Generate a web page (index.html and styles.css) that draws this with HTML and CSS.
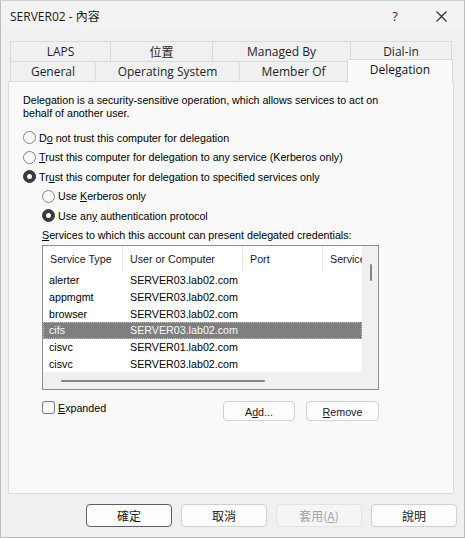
FILE: index.html
```html
<!DOCTYPE html>
<html lang="zh-Hant">
<head>
    <meta charset="UTF-8">
    <title>SERVER02 - 內容</title>
    <link rel="stylesheet" href="styles.css">
</head>
<body>
    <div class="window">
        <div class="titlebar">
            <span class="title">SERVER02 - 內容</span>
            <span class="caption-btn">?</span>
            <span class="caption-btn">
                <svg width="11" height="11" viewBox="0 0 11 11"><path d="M0.5 0.5 L10.5 10.5 M10.5 0.5 L0.5 10.5" stroke="#2b2b2b" stroke-width="1.1" fill="none"/></svg>
            </span>
        </div>

        <div class="tabs">
            <div class="tab-row">
                <div class="tab first" style="width:101px">LAPS</div>
                <div class="tab" style="width:102px">位置</div>
                <div class="tab" style="width:138px">Managed By</div>
                <div class="tab" style="width:101px">Dial-in</div>
            </div>
            <div class="tab-row">
                <div class="tab first" style="width:86px">General</div>
                <div class="tab" style="width:144px">Operating System</div>
                <div class="tab" style="width:108px">Member Of</div>
                <div class="tab selected" style="width:106px">Delegation</div>
            </div>
        </div>

        <div class="panel">
            <p class="intro">Delegation is a security-sensitive operation, which allows services to act on behalf of another user.</p>

            <div class="radio-row first-radio"><span class="radio"></span><span>D<u>o</u> not trust this computer for delegation</span></div>
            <div class="radio-row"><span class="radio"></span><span><u>T</u>rust this computer for delegation to any service (Kerberos only)</span></div>
            <div class="radio-row"><span class="radio on"></span><span>Tr<u>u</u>st this computer for delegation to specified services only</span></div>
            <div class="radio-row sub"><span class="radio"></span><span>Use <u>K</u>erberos only</span></div>
            <div class="radio-row sub"><span class="radio on"></span><span>Use an<u>y</u> authentication protocol</span></div>
            <div class="list-label"><span><u>S</u>ervices to which this account can present delegated credentials:</span></div>

            <div class="listview">
                <div class="list-body">
                    <div class="list-head">
                        <div class="col c1">Service Type</div>
                        <div class="col c2">User or Computer</div>
                        <div class="col c3">Port</div>
                        <div class="col c4">Service</div>
                    </div>
                    <div class="list-row"><span class="c1">alerter</span><span class="c2">SERVER03.lab02.com</span></div>
                    <div class="list-row"><span class="c1">appmgmt</span><span class="c2">SERVER03.lab02.com</span></div>
                    <div class="list-row"><span class="c1">browser</span><span class="c2">SERVER03.lab02.com</span></div>
                    <div class="list-row selected"><span class="c1">cifs</span><span class="c2">SERVER03.lab02.com</span></div>
                    <div class="list-row"><span class="c1">cisvc</span><span class="c2">SERVER01.lab02.com</span></div>
                    <div class="list-row"><span class="c1">cisvc</span><span class="c2">SERVER03.lab02.com</span></div>
                </div>
                <div class="vscroll"><div class="vthumb"></div></div>
                <div class="hscroll"><div class="hthumb"></div></div>
                <div class="corner"></div>
            </div>

            <div class="list-actions">
                <label class="check"><span class="box"></span><span><u>E</u>xpanded</span></label>
                <button class="small-btn add">A<u>d</u>d...</button>
                <button class="small-btn remove"><u>R</u>emove</button>
            </div>
        </div>

        <div class="footer">
            <button class="dlg-btn default">確定</button>
            <button class="dlg-btn">取消</button>
            <button class="dlg-btn disabled">套用(<u>A</u>)</button>
            <button class="dlg-btn">說明</button>
        </div>
    </div>
</body>
</html>
```

FILE: styles.css
```css
body {
    margin: 0;
    background: #f0f0f0;
}
.window {
    width: 465px;
    height: 538px;
    box-sizing: border-box;
    border: 1px solid #bcbcbc;
    border-top-color: #d0d0d0;
    background: #f0f0f0;
    display: flex;
    flex-direction: column;
    font-family: "Liberation Sans", Arial, sans-serif;
    color: #000;
}
.titlebar {
    height: 30px;
    display: flex;
    align-items: center;
    padding-left: 9px;
    background: #f3f3f3;
    font: 12px "Open Sans", "Noto Sans CJK TC", sans-serif;
    color: #1a1a1a;
}
.title {
    flex: 1;
}
.caption-btn {
    width: 46px;
    height: 30px;
    display: flex;
    align-items: center;
    justify-content: center;
    font-size: 13px;
    color: #2b2b2b;
}

/* tabs */
.tabs {
    margin: 10px 0 0 9px;
    font: 12px "Open Sans", "Noto Sans CJK TC", sans-serif;
    color: #1f1f1f;
}
.tab-row {
    display: flex;
    align-items: flex-start;
    height: 20px;
}
.tab {
    flex-shrink: 0;
    height: 20px;
    box-sizing: border-box;
    border-top: 1px solid #dadada;
    border-right: 1px solid #dadada;
    display: flex;
    align-items: center;
    justify-content: center;
    background: #f0f0f0;
}
.tab.first {
    border-left: 1px solid #dadada;
}
.tab.selected {
    height: 24px;
    margin-top: -2px;
    padding-bottom: 5px;
    border-left: 1px solid #dadada;
    margin-left: -1px;
    background: #f9f9f9;
    position: relative;
    z-index: 2;
    color: #111;
}

/* panel */
.panel {
    position: relative;
    z-index: 1;
    margin-left: 7px;
    width: 446px;
    height: 413px;
    box-sizing: border-box;
    border: 1px solid #dcdcdc;
    background: #f9f9f9;
    padding: 12px 0 0 14px;
    font-size: 10.7px;
}
.intro {
    margin: 0;
    width: 380px;
    line-height: 13px;
}
.radio-row {
    height: 19.5px;
    display: flex;
    align-items: center;
    gap: 3px;
    white-space: nowrap;
}
.first-radio {
    margin-top: 8px;
}
.radio-row.sub {
    padding-left: 19px;
}
.radio {
    flex-shrink: 0;
    width: 13px;
    height: 13px;
    box-sizing: border-box;
    border: 1px solid #858585;
    border-radius: 50%;
    background: #fbfbfb;
    display: inline-flex;
    align-items: center;
    justify-content: center;
}
.radio.on {
    background: #3a3a3a;
    border-color: #3a3a3a;
}
.radio.on::after {
    content: "";
    width: 5px;
    height: 5px;
    border-radius: 50%;
    background: #fff;
}
.list-label {
    height: 19.5px;
    display: flex;
    align-items: center;
    padding-left: 19px;
}

/* list view */
.listview {
    margin-left: 19px;
    width: 337px;
    box-sizing: border-box;
    border: 1px solid #8e8e8e;
    background: #f0f0f0;
    display: grid;
    grid-template-columns: 319px 16px;
    grid-template-rows: 126px 17px;
}
.list-body {
    background: #fff;
    overflow: hidden;
    border-bottom-right-radius: 4px;
}
.list-head {
    height: 26px;
    display: flex;
    color: #1a1a1a;
}
.list-head .col {
    flex-shrink: 0;
    box-sizing: border-box;
    border-right: 1px solid #e5e5e5;
    display: flex;
    align-items: center;
    padding-left: 7px;
    white-space: nowrap;
    overflow: hidden;
}
.c1 { width: 80px; }
.c2 { width: 120px; }
.c3 { width: 80px; }
.list-head .c4 {
    width: 60px;
    border-right: none;
}
.list-row {
    height: 16.7px;
    box-sizing: border-box;
    display: flex;
    align-items: center;
    white-space: nowrap;
}
.list-row span {
    flex-shrink: 0;
    box-sizing: border-box;
}
.list-row .c1 {
    padding-left: 6px;
}
.list-row .c2 {
    padding-left: 7px;
}
.list-row.selected {
    background: #7f7f7f;
    color: #fafafa;
    border: 1px dotted #c4c4c4;
}
.list-row.selected .c1 {
    width: 79px;
    padding-left: 5px;
}
.vscroll {
    padding: 18px 0 0 8px;
}
.vthumb {
    width: 2px;
    height: 17px;
    border-radius: 1px;
    background: #858585;
}
.hscroll {
    padding: 8px 0 0 18px;
}
.hthumb {
    width: 204px;
    height: 2px;
    border-radius: 1px;
    background: #858585;
}

.list-actions {
    margin: 11px 0 0 19px;
    width: 337px;
    display: flex;
    align-items: flex-start;
}
.check {
    display: flex;
    align-items: center;
    gap: 3px;
    height: 13px;
}
.box {
    width: 13px;
    height: 13px;
    box-sizing: border-box;
    border: 1px solid #7a7a7a;
    border-radius: 3px;
    background: #fbfbfb;
}
.small-btn {
    height: 20px;
    box-sizing: border-box;
    border: 1px solid #d0d0d0;
    border-radius: 4px;
    background: #fdfdfd;
    font: 10.7px "Liberation Sans", Arial, sans-serif;
    color: #1a1a1a;
    padding: 2px 0 0;
}
.small-btn.add {
    margin-left: auto;
    width: 72px;
}
.small-btn.remove {
    margin-left: 11px;
    width: 73px;
}

/* dialog buttons */
.footer {
    display: flex;
    justify-content: flex-end;
    gap: 9px;
    padding-right: 7px;
    margin-top: 10px;
}
.dlg-btn {
    width: 86px;
    height: 23px;
    box-sizing: border-box;
    border: 1px solid #d0d0d0;
    border-radius: 4px;
    background: #fdfdfd;
    font: 12px "Noto Sans CJK TC", "Open Sans", sans-serif;
    color: #1a1a1a;
    padding: 0;
}
.dlg-btn.default {
    border-color: #5e5e5e;
}
.dlg-btn.disabled {
    background: #f5f5f5;
    border-color: #e3e3e3;
    color: #a3a3a3;
}
```
